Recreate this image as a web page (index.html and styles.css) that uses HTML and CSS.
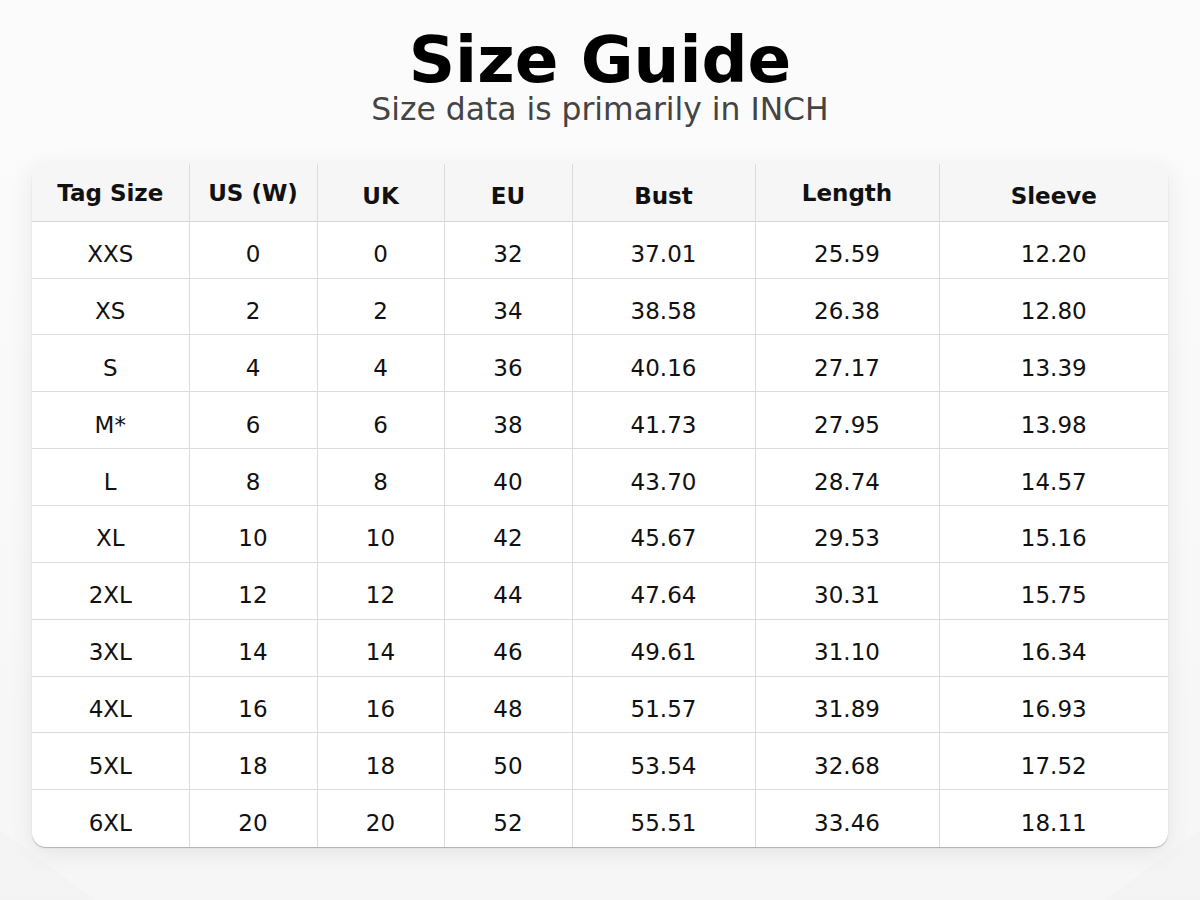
FILE: index.html
```html
<!DOCTYPE html>
<html lang="en">
<head>
<meta charset="utf-8">
<title>Size Guide</title>
<link rel="stylesheet" href="styles.css">
</head>
<body>
<div class="page">
  <header class="heading">
    <h1 class="title">Size Guide</h1>
    <p class="subtitle">Size data is primarily in INCH</p>
  </header>
  <div class="card">
    <table class="sizes">
      <colgroup>
        <col class="c1"><col class="c2"><col class="c3"><col class="c4"><col class="c5"><col class="c6"><col class="c7">
      </colgroup>
      <thead>
        <tr>
          <th class="up">Tag Size</th>
          <th class="up">US (W)</th>
          <th>UK</th>
          <th>EU</th>
          <th>Bust</th>
          <th class="up">Length</th>
          <th>Sleeve</th>
        </tr>
      </thead>
      <tbody>
        <tr><td>XXS</td><td>0</td><td>0</td><td>32</td><td>37.01</td><td>25.59</td><td>12.20</td></tr>
        <tr><td>XS</td><td>2</td><td>2</td><td>34</td><td>38.58</td><td>26.38</td><td>12.80</td></tr>
        <tr><td>S</td><td>4</td><td>4</td><td>36</td><td>40.16</td><td>27.17</td><td>13.39</td></tr>
        <tr><td>M*</td><td>6</td><td>6</td><td>38</td><td>41.73</td><td>27.95</td><td>13.98</td></tr>
        <tr><td>L</td><td>8</td><td>8</td><td>40</td><td>43.70</td><td>28.74</td><td>14.57</td></tr>
        <tr><td>XL</td><td>10</td><td>10</td><td>42</td><td>45.67</td><td>29.53</td><td>15.16</td></tr>
        <tr><td>2XL</td><td>12</td><td>12</td><td>44</td><td>47.64</td><td>30.31</td><td>15.75</td></tr>
        <tr><td>3XL</td><td>14</td><td>14</td><td>46</td><td>49.61</td><td>31.10</td><td>16.34</td></tr>
        <tr><td>4XL</td><td>16</td><td>16</td><td>48</td><td>51.57</td><td>31.89</td><td>16.93</td></tr>
        <tr><td>5XL</td><td>18</td><td>18</td><td>50</td><td>53.54</td><td>32.68</td><td>17.52</td></tr>
        <tr><td>6XL</td><td>20</td><td>20</td><td>52</td><td>55.51</td><td>33.46</td><td>18.11</td></tr>
      </tbody>
    </table>
  </div>
</div>
</body>
</html>
```

FILE: styles.css
```css
html, body {
  margin: 0;
  padding: 0;
}

body {
  width: 1200px;
  height: 900px;
  overflow: hidden;
  font-family: "DejaVu Sans", "Liberation Sans", sans-serif;
  color: #111;
  background: linear-gradient(180deg, #ffffff 0%, #fbfbfb 40%, #f3f3f3 100%);
  position: relative;
}

body::before {
  content: "";
  position: absolute;
  left: 0;
  top: 0;
  width: 1200px;
  height: 900px;
  background: #f8f8f8;
  clip-path: polygon(0 0, 1200px 0, 1200px 830px, 1105px 900px, 95px 900px, 0 830px);
  opacity: 0.6;
  z-index: 0;
}

.page {
  position: relative;
  z-index: 1;
  display: flex;
  flex-direction: column;
  align-items: center;
  padding-top: 29px;
}

.heading {
  display: flex;
  flex-direction: column;
  align-items: center;
}

.title {
  margin: 0;
  font-size: 64.4px;
  line-height: 62px;
  font-weight: bold;
  color: #000;
}

.subtitle {
  margin: 3px 0 0 0;
  font-size: 31.4px;
  line-height: 31.4px;
  color: #444;
}

.card {
  margin-top: 39px;
  width: 1136px;
  border-radius: 14px;
  overflow: hidden;
  background: #fff;
  box-shadow: 0 1px 1px rgba(0, 0, 0, 0.25), 0 6px 24px rgba(0, 0, 0, 0.08);
}

.sizes {
  width: 1136px;
  border-collapse: collapse;
  table-layout: fixed;
}

.c1 { width: 157px; }
.c2 { width: 128px; }
.c3 { width: 127px; }
.c4 { width: 128px; }
.c5 { width: 183px; }
.c6 { width: 184px; }
.c7 { width: 229px; }

.sizes th,
.sizes td {
  height: 56.85px;
  box-sizing: border-box;
  padding: 9px 0 0 0;
  text-align: center;
  vertical-align: middle;
  font-size: 23px;
  border-left: 1px solid #dcdcdc;
  border-top: 1px solid #dcdcdc;
}

.sizes th:first-child,
.sizes td:first-child {
  border-left: none;
}

.sizes thead tr th {
  border-top: none;
  background: #f6f6f6;
  font-weight: bold;
  color: #111;
  padding-top: 6px;
}

.sizes thead tr th.up {
  padding-top: 1px;
}

.sizes tbody tr:first-child td {
  border-top: 1px solid #d6d6d6;
}
```
